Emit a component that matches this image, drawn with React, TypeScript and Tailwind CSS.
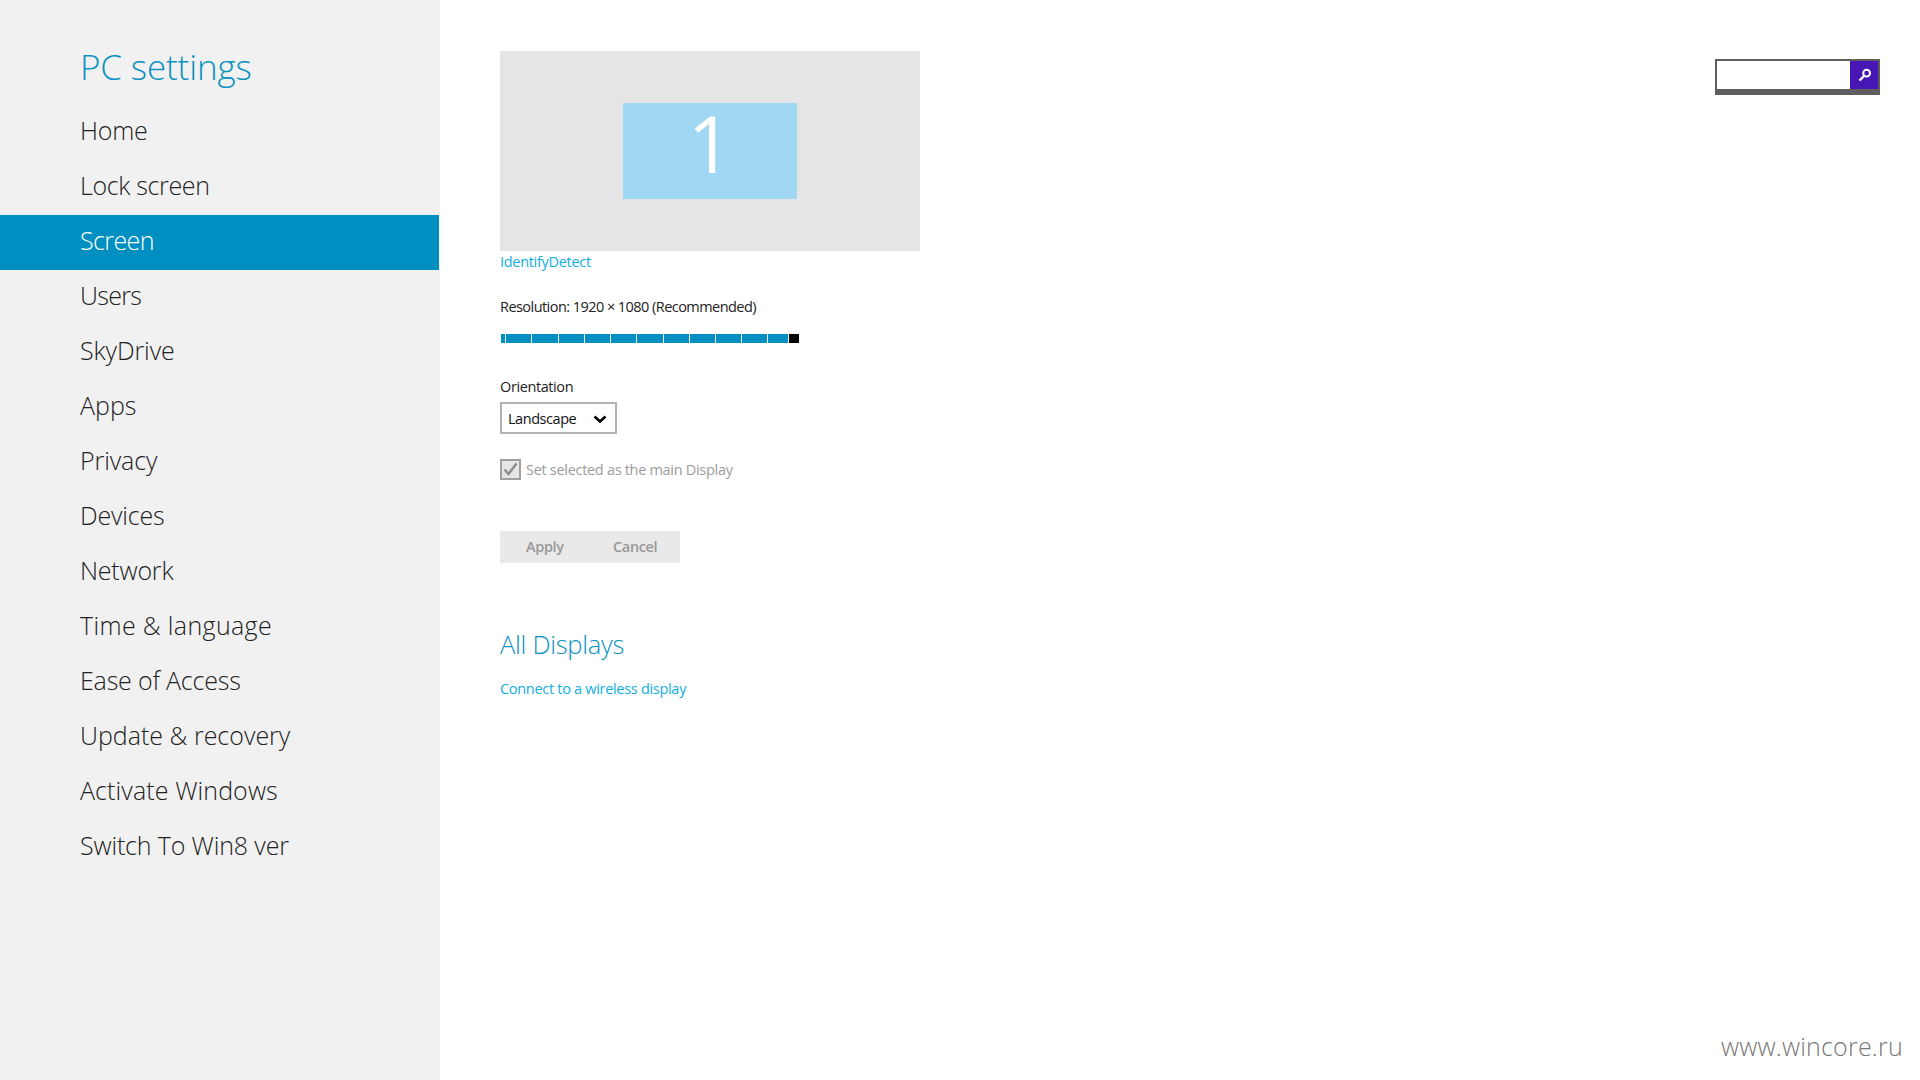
const nav: [string, string][] = [
  ["Home", "tracking-[-0.2px]"],
  ["Lock screen", "tracking-[-0.35px]"],
  ["Screen", "tracking-[-0.6px]"],
  ["Users", "tracking-[-0.7px]"],
  ["SkyDrive", "tracking-[-0.1px]"],
  ["Apps", "tracking-[0px]"],
  ["Privacy", "tracking-[-0.1px]"],
  ["Devices", "tracking-[-0.2px]"],
  ["Network", "tracking-[-0.2px]"],
  ["Time & language", "tracking-[0.35px]"],
  ["Ease of Access", "tracking-[-0.2px]"],
  ["Update & recovery", "tracking-[0px]"],
  ["Activate Windows", "tracking-[0.1px]"],
  ["Switch To Win8 ver", "tracking-[-0.15px]"],
];
const segs = [4,25,26,25,25,25,26,25,25,25,25,20];

export default function App() {
  return (
    <div className="relative flex h-[1080px] w-[1920px] overflow-hidden bg-white font-['Open_Sans','Liberation_Sans',sans-serif] text-black">
      <aside className="h-full w-[440px] shrink-0 bg-[#f1f1f1] pt-[42px]">
        <h1 className="h-[63px] pl-[80px] text-[35px] leading-[50px] font-light tracking-[-0.15px] text-[#0d92c1]">PC settings</h1>
        <nav className="flex flex-col">
          {nav.map(([n, t]) => (
            <div key={n} className={`h-[55px] w-[439px] pl-[80px] text-[25px] leading-[51px] font-light ${t} ${n === "Screen" ? "bg-[#008fc1] text-white" : "text-[#222222]"}`}>{n}</div>
          ))}
        </nav>
      </aside>
      <main className="relative flex-1 pl-[60px] pt-[51px]">
        <div className="flex h-[200px] w-[420px] items-center justify-center bg-[#e5e5e5]">
          <div className="flex h-[96px] w-[174px] items-center justify-center bg-[#a0d8f3] pb-[16px] text-[78px] leading-none font-normal text-white">1</div>
        </div>
        <div className="mt-[1px] h-[20px] text-[14.5px] leading-[20px] tracking-[-0.3px] text-[#13aee1]">IdentifyDetect</div>
        <div className="mt-[25px] h-[20px] text-[14.5px] leading-[20px] tracking-[-0.55px] text-[#222222]">Resolution: 1920 × 1080 (Recommended)</div>
        <div className="ml-[1px] mt-[17px] flex h-[9px] w-[298px]">
          <div className="flex flex-1 gap-[1px]">
            {segs.map((w, i) => <div key={i} className="h-full bg-[#008fc1]" style={{ width: w }} />)}
          </div>
          <div className="h-full w-[10px] bg-black" />
        </div>
        <div className="mt-[34px] h-[20px] text-[14.5px] leading-[20px] tracking-[-0.4px] text-[#222222]">Orientation</div>
        <div className="mt-[5px] flex h-[32px] w-[117px] items-center justify-between border-2 border-[#b3b3b3] pl-[6px] pr-[7px] text-[14.5px] tracking-[-0.45px] text-[#111111]">
          <span className="translate-y-[1px]">Landscape</span>
          <svg width="14" height="10" viewBox="0 0 14 10" className="mt-[2px] mr-[1px]"><path d="M1.5 2.5 L7 7.5 L12.5 2.5" fill="none" stroke="#000" strokeWidth="2.6" /></svg>
        </div>
        <div className="mt-[25px] flex h-[21px] items-center gap-[5px]">
          <div className="flex h-[21px] w-[21px] items-center justify-center border-2 border-[#a0a0a0] bg-[#e6e6e6]">
            <svg width="17" height="17" viewBox="0 0 17 17"><path d="M2.5 8.5 L6.5 13 L14.5 2.5" fill="none" stroke="#8f8f8f" strokeWidth="2.6" /></svg>
          </div>
          <span className="text-[14.5px] tracking-[-0.3px] text-[#9c9c9c]">Set selected as the main Display</span>
        </div>
        <div className="mt-[51px] flex h-[32px] w-[180px] items-center bg-[#e9e9e9] text-[14.5px] font-semibold tracking-[-0.35px] text-[#989898]">
          <span className="w-[113px] pl-[26px]">Apply</span>
          <span>Cancel</span>
        </div>
        <h2 className="mt-[61px] h-[40px] text-[25.5px] leading-[40px] font-light tracking-[-0.25px] text-[#0d92c1]">All Displays</h2>
        <div className="mt-[15px] h-[20px] text-[14.5px] leading-[20px] tracking-[-0.3px] text-[#13aee1]">Connect to a wireless display</div>
      </main>
      <div className="absolute left-[1715px] top-[59px] flex h-[36px] w-[165px] border-x-2 border-b-[6px] border-t-2 border-[#5e5e5e]">
        <div className="flex-1 bg-white" />
        <div className="flex w-[28px] items-center justify-center bg-[#4617b4]">
          <svg width="14" height="14" viewBox="0 0 14 14" className="ml-[1px]"><circle cx="8.6" cy="5.2" r="3.4" fill="none" stroke="#fff" strokeWidth="2" /><path d="M6 8 L1.5 12.5" stroke="#fff" strokeWidth="2.4" /></svg>
        </div>
      </div>
      <div className="absolute left-[1721px] top-[1029px] text-[25px] leading-[34px] font-light tracking-[0.2px] text-[#777777]">www.wincore.ru</div>
    </div>
  );
}
